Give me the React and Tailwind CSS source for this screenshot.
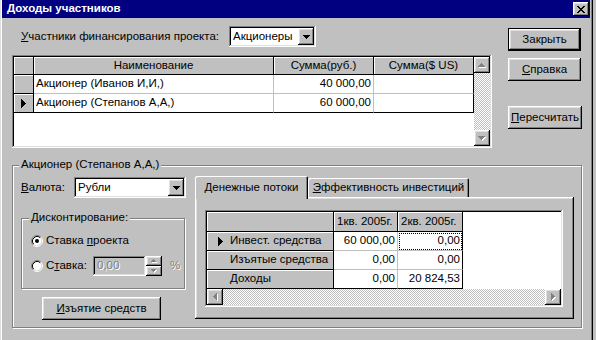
import React from "react";

const raised =
  "shadow-[inset_-1px_-1px_#000,inset_1px_1px_#fff,inset_-2px_-2px_#808080,inset_2px_2px_#dfdfdf]";
const sunken =
  "shadow-[inset_-1px_-1px_#fff,inset_1px_1px_#808080,inset_-2px_-2px_#dfdfdf,inset_2px_2px_#000]";
const checker =
  "bg-[image:repeating-conic-gradient(#fff_0_25%,#c0c0c0_0_50%)] bg-[length:2px_2px]";
const etched = "border border-[#808080] shadow-[1px_1px_0_#fff,inset_1px_1px_0_#fff]";
const embossed = "text-[#808080] [text-shadow:1px_1px_0_#fff]";

// pixel arrows
const ARROWS = {
  down: { w: 7, h: 4, d: "M0 0h7v1h-7zM1 1h5v1h-5zM2 2h3v1h-3zM3 3h1v1h-1z" },
  up: { w: 7, h: 4, d: "M3 0h1v1h-1zM2 1h3v1h-3zM1 2h5v1h-5zM0 3h7v1h-7z" },
  left: { w: 4, h: 7, d: "M3 0h1v7h-1zM2 1h1v5h-1zM1 2h1v3h-1zM0 3h1v1h-1z" },
  right: { w: 4, h: 7, d: "M0 0h1v7h-1zM1 1h1v5h-1zM2 2h1v3h-1zM3 3h1v1h-1z" },
  spinUp: { w: 5, h: 3, d: "M2 0h1v1h-1zM1 1h3v1h-3zM0 2h5v1h-5z" },
  spinDown: { w: 5, h: 3, d: "M0 0h5v1h-5zM1 1h3v1h-3zM2 2h1v1h-1z" },
  pointer: { w: 5, h: 9, d: "M0 0h1v9h-1zM1 1h1v7h-1zM2 2h1v5h-1zM3 3h1v3h-1zM4 4h1v1h-1z" },
};

function Arrow({ kind, disabled }) {
  const a = ARROWS[kind];
  if (disabled) {
    return (
      <svg width={a.w + 1} height={a.h + 1} shapeRendering="crispEdges">
        <path d={a.d} fill="#fff" transform="translate(1 1)" />
        <path d={a.d} fill="#808080" />
      </svg>
    );
  }
  return (
    <svg width={a.w} height={a.h} shapeRendering="crispEdges">
      <path d={a.d} fill="#000" />
    </svg>
  );
}

function CloseGlyph() {
  return (
    <svg width="8" height="7" shapeRendering="crispEdges">
      <path
        d="M0 0h2v1h-2zM6 0h2v1h-2zM1 1h2v1h-2zM5 1h2v1h-2zM2 2h4v1h-4zM3 3h2v1h-2zM2 4h4v1h-4zM1 5h2v1h-2zM5 5h2v1h-2zM0 6h2v1h-2zM6 6h2v1h-2z"
        fill="#000"
      />
    </svg>
  );
}

function Radio({ checked }) {
  return (
    <svg width="12" height="12" viewBox="0 0 12 12" className="shrink-0">
      <circle cx="6" cy="6" r="4.5" fill="#fff" />
      <path d="M2.11 9.89A5.5 5.5 0 0 1 9.89 2.11" fill="none" stroke="#808080" />
      <path d="M2.11 9.89A5.5 5.5 0 0 0 9.89 2.11" fill="none" stroke="#fff" />
      <path d="M2.82 9.18A4.5 4.5 0 0 1 9.18 2.82" fill="none" stroke="#000" />
      <path d="M2.82 9.18A4.5 4.5 0 0 0 9.18 2.82" fill="none" stroke="#dfdfdf" />
      {checked && <circle cx="6" cy="6" r="2" fill="#000" />}
    </svg>
  );
}

function Combo({ width, text }) {
  return (
    <div className={`${width} h-[21px] bg-white ${sunken} flex items-center pl-[4px] pr-[2px]`}>
      <span>{text}</span>
      <div className={`ml-auto w-[16px] h-[17px] bg-[#c0c0c0] ${raised} flex items-center justify-center`}>
        <Arrow kind="down" />
      </div>
    </div>
  );
}

function ScrollBtn({ kind }) {
  return (
    <div className={`w-[16px] h-[16px] shrink-0 bg-[#c0c0c0] ${raised} flex items-center justify-center`}>
      <Arrow kind={kind} disabled />
    </div>
  );
}

const hdr =
  "h-full flex items-center border-r border-b border-black bg-[#c0c0c0] shadow-[inset_1px_1px_0_#fff]";

function ShareholdersGrid() {
  const rows = [
    { name: "Акционер (Иванов И,И,)", rub: "40 000,00", usd: "" },
    { name: "Акционер (Степанов А,А,)", rub: "60 000,00", usd: "", current: true },
  ];
  return (
    <div className={`w-[480px] h-[93px] ${sunken} p-[2px] flex`}>
      <div className="w-[460px] bg-white flex flex-col">
        <div className="h-[18px] flex">
          <div className={`${hdr} w-[20px]`} />
          <div className={`${hdr} w-[240px] justify-center`}>Наименование</div>
          <div className={`${hdr} w-[100px] justify-center`}>Сумма(руб.)</div>
          <div className={`${hdr} w-[100px] justify-center`}>Сумма($ US)</div>
        </div>
        {rows.map((r, i) => {
          const last = i === rows.length - 1;
          const bb = last ? "border-b-black" : "border-b-[#c0c0c0]";
          return (
            <div key={r.name} className="h-[19px] flex">
              <div className={`${hdr} w-[20px] justify-center`}>
                {r.current && <Arrow kind="pointer" />}
              </div>
              <div className={`h-full w-[240px] flex items-center pl-[2px] border-r border-b border-r-[#c0c0c0] ${bb}`}>
                {r.name}
              </div>
              <div className={`h-full w-[100px] flex items-center justify-end pr-[2px] border-r border-b border-r-[#c0c0c0] ${bb}`}>
                {r.rub}
              </div>
              <div className={`h-full w-[100px] flex items-center justify-end pr-[2px] border-r border-b border-r-black ${bb}`}>
                {r.usd}
              </div>
            </div>
          );
        })}
      </div>
      <div className="w-[16px] flex flex-col">
        <ScrollBtn kind="up" />
        <div className={`flex-1 ${checker}`} />
        <ScrollBtn kind="down" />
      </div>
    </div>
  );
}

function FlowsGrid() {
  const rows = [
    { name: "Инвест. средства", q1: "60 000,00", q2: "0,00", current: true },
    { name: "Изъятые средства", q1: "0,00", q2: "0,00" },
    { name: "Доходы", q1: "0,00", q2: "20 824,53" },
  ];
  return (
    <div className={`w-[358px] h-[97px] ${sunken} p-[2px] flex flex-col`}>
      <div className="h-[77px] bg-white flex flex-col">
        <div className="h-[20px] flex">
          <div className={`${hdr} w-[127px]`} />
          <div className={`${hdr} w-[64px] pl-[3px]`}>1кв. 2005г.</div>
          <div className={`${hdr} w-[65px] pl-[3px]`}>2кв. 2005г.</div>
        </div>
        {rows.map((r, i) => {
          const last = i === rows.length - 1;
          const bb = last ? "border-b-black" : "border-b-[#c0c0c0]";
          return (
            <div key={r.name} className="h-[19px] flex">
              <div className={`${hdr} w-[127px] pl-[11px]`}>
                <span className="w-[12px] flex items-center">
                  {r.current && <Arrow kind="pointer" />}
                </span>
                {r.name}
              </div>
              <div className={`h-full w-[64px] flex items-center justify-end pr-[2px] border-r border-b border-r-[#c0c0c0] ${bb}`}>
                {r.q1}
              </div>
              <div
                className={`h-full w-[65px] flex items-center justify-end pr-[2px] border-r border-b border-r-black ${bb} ${
                  r.current ? "outline-1 outline-dotted outline-black outline-offset-[-2px]" : ""
                }`}
              >
                {r.q2}
              </div>
            </div>
          );
        })}
      </div>
      <div className="h-[16px] flex">
        <ScrollBtn kind="left" />
        <div className={`flex-1 ${checker}`} />
        <ScrollBtn kind="right" />
      </div>
    </div>
  );
}

function Button({ children, width, isDefault }) {
  return (
    <div
      className={`${width} h-[23px] bg-[#c0c0c0] ${raised} flex items-center justify-center ${
        isDefault ? "border border-black" : ""
      }`}
    >
      {children}
    </div>
  );
}

export default function App() {
  return (
    <div className="w-[596px] h-[340px] bg-[#c0c0c0] overflow-hidden">
      <div className="w-[593px] h-[340px] flex flex-col bg-[#c0c0c0] shadow-[inset_1px_0_#dfdfdf,inset_2px_0_#fff,inset_-1px_0_#000,inset_-2px_0_#808080] font-['Liberation_Sans',Arial,sans-serif] text-[11.5px] leading-none text-black">
        {/* title bar */}
        <div className="ml-[2px] w-[588px] h-[18px] shrink-0 bg-[#000080] flex items-center pl-[5px] pr-[1px]">
          <span className="text-white font-bold">Доходы участников</span>
          <div className={`ml-auto w-[16px] h-[14px] bg-[#c0c0c0] ${raised} flex items-center justify-center`}>
            <CloseGlyph />
          </div>
        </div>

        {/* participants */}
        <div className="flex">
          <div className="ml-[12px] w-[480px] flex flex-col">
            <div className="h-[37px] flex items-center">
              <span className="ml-[9px] w-[208px]">
                <u>У</u>частники финансирования проекта:
              </span>
              <Combo width="w-[87px]" text="Акционеры" />
            </div>
            <ShareholdersGrid />
          </div>
          <div className="ml-[16px] pt-[10px] flex flex-col">
            <Button width="w-[73px]" isDefault>
              Закрыть
            </Button>
            <div className="mt-[7px]">
              <Button width="w-[73px]">
                <u>С</u>правка
              </Button>
            </div>
            <div className="mt-[25px]">
              <Button width="w-[74px]">
                <u>П</u>ересчитать
              </Button>
            </div>
          </div>
        </div>

        {/* selected participant */}
        <div className={`relative ml-[12px] mt-[17px] w-[570px] h-[163px] ${etched} flex`}>
          <span className="absolute -top-[7px] left-[6px] px-[2px] bg-[#c0c0c0]">Акционер (Степанов А,А,)</span>

          <div className="ml-[8px] pt-[11px] w-[165px] flex flex-col">
            <div className="h-[21px] flex items-center">
              <span className="w-[53px]">
                <u>В</u>алюта:
              </span>
              <Combo width="w-[112px]" text="Рубли" />
            </div>

            <div className={`relative mt-[20px] w-[164px] h-[71px] ${etched} flex flex-col`}>
              <span className="absolute -top-[7px] left-[7px] px-[2px] bg-[#c0c0c0]">Дисконтирование:</span>
              <div className="mt-[15px] h-[14px] pl-[9px] flex items-center">
                <Radio checked />
                <span className="ml-[3px]">
                  Ставка <u>п</u>роекта
                </span>
              </div>
              <div className="mt-[8px] h-[20px] pl-[9px] flex items-center">
                <Radio />
                <span className="ml-[3px] w-[47px]">
                  С<u>т</u>авка:
                </span>
                <div className={`w-[53px] h-[20px] ${sunken} flex items-center pl-[4px]`}>
                  <span className={embossed}>0,00</span>
                </div>
                <div className="w-[16px] h-[20px] flex flex-col">
                  <div className={`h-[10px] bg-[#c0c0c0] ${raised} flex items-center justify-center`}>
                    <Arrow kind="spinUp" disabled />
                  </div>
                  <div className={`h-[10px] bg-[#c0c0c0] ${raised} flex items-center justify-center`}>
                    <Arrow kind="spinDown" disabled />
                  </div>
                </div>
                <span className={`ml-[8px] ${embossed}`}>%</span>
              </div>
            </div>

            <div className="mt-[8px] ml-[21px]">
              <Button width="w-[119px]">
                <u>И</u>зъятие средств
              </Button>
            </div>
          </div>

          {/* tabs */}
          <div className="ml-[9px] pt-[10px] flex flex-col">
            <div className="h-[21px] flex items-end">
              <div className="relative z-10 -mb-[2px] w-[113px] h-[23px] bg-[#c0c0c0] rounded-t-[2px] shadow-[inset_1px_1px_0_#fff,inset_-1px_0_0_#000,inset_-2px_0_0_#808080] flex items-center justify-center">
                <span>
                  <u>Д</u>енежные потоки
                </span>
              </div>
              <div className="w-[161px] h-[19px] bg-[#c0c0c0] rounded-t-[2px] shadow-[inset_1px_1px_0_#fff,inset_-1px_0_0_#000,inset_-2px_0_0_#808080] flex items-center justify-center">
                <span>
                  <u>Э</u>ффективность инвестиций
                </span>
              </div>
            </div>
            <div className={`w-[379px] h-[122px] bg-[#c0c0c0] ${raised} pl-[10px] pt-[13px]`}>
              <FlowsGrid />
            </div>
          </div>
        </div>
      </div>
    </div>
  );
}
